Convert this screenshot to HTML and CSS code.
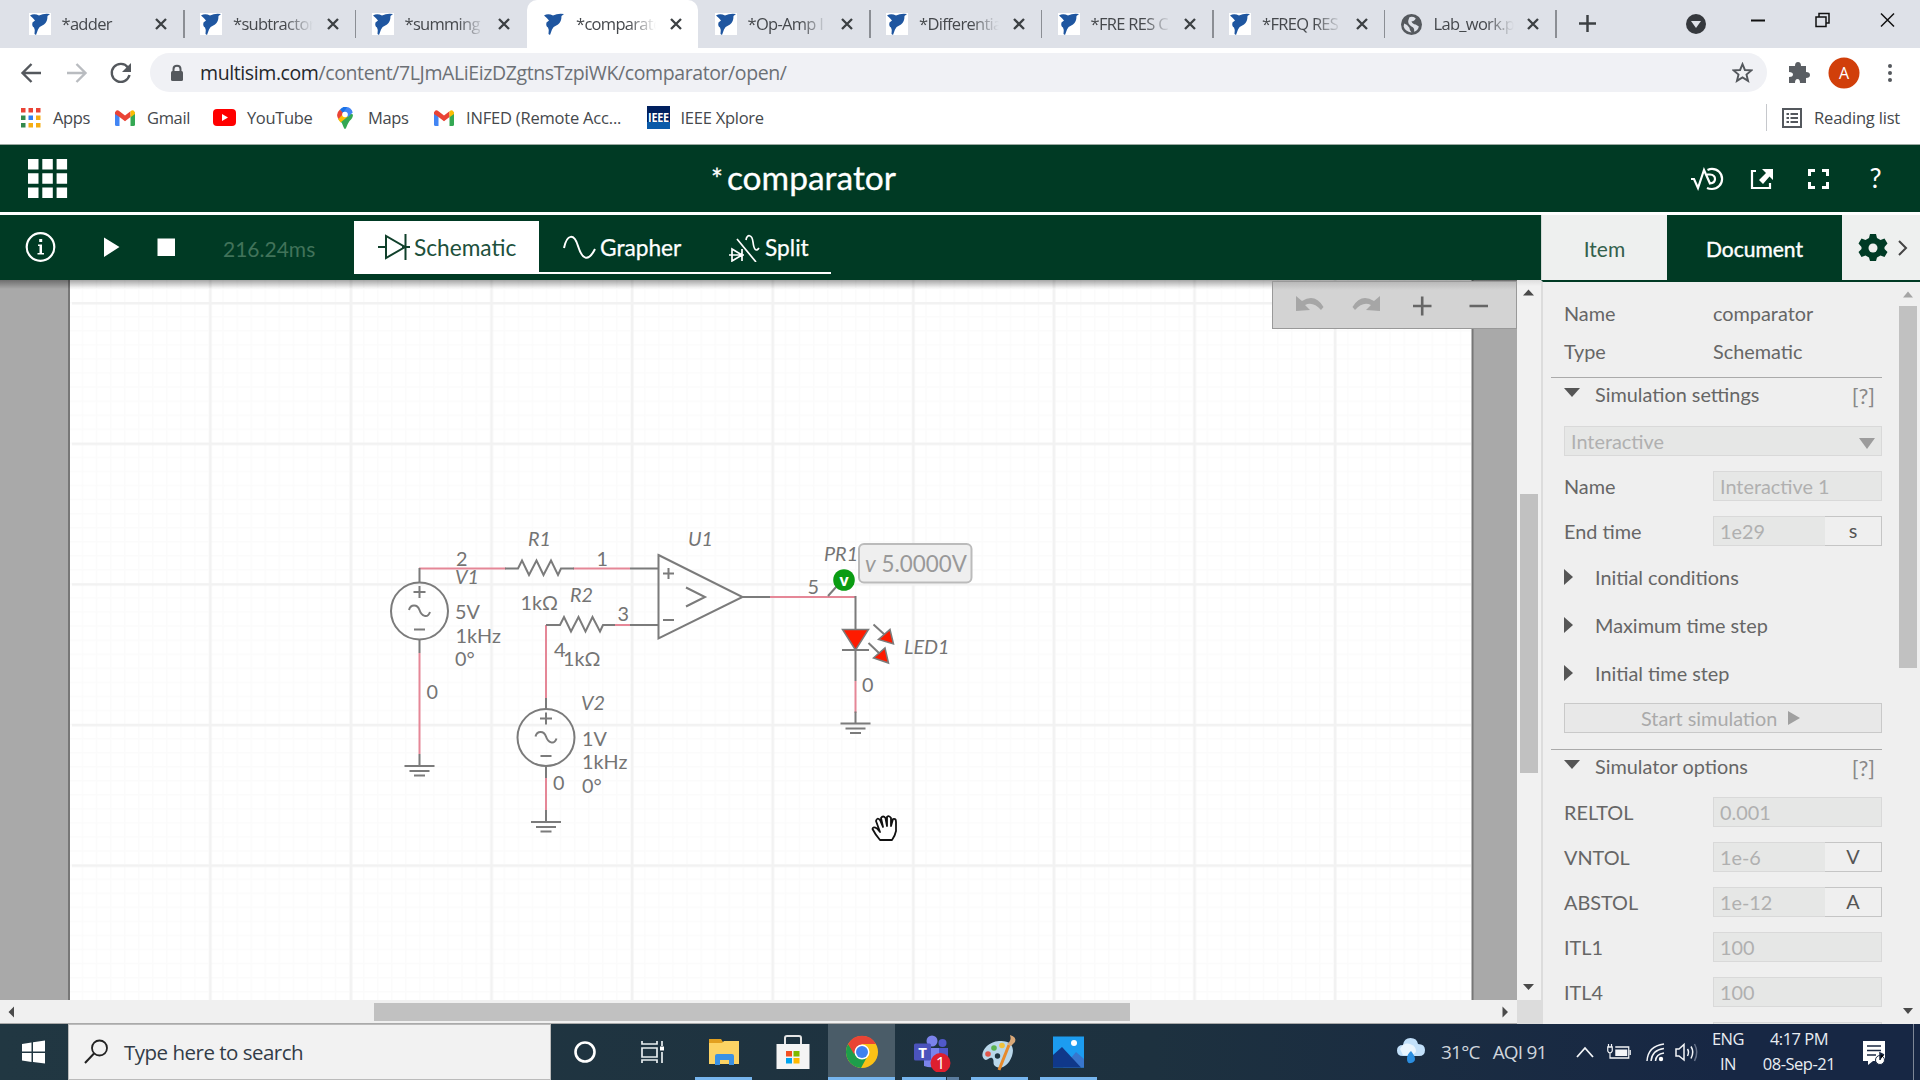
FILE: index.html
```html
<!DOCTYPE html>
<html lang="en">
<head>
<meta charset="utf-8">
<title>*comparator</title>
<link rel="stylesheet" href="styles.css">
</head>
<body>
<svg width="0" height="0" class="defs">
  <symbol id="ni" viewBox="0 0 22 22"><path fill="#1f56a0" d="M1 2.500Q5 0 10 2.500Q15 0 21 1L18.500 3Q18.500 9 15 11.500Q11 13 9 16.500L7 22L5.500 21Q6.500 17 5 14.500Q2.500 13 3.500 9.500L6 7.500Q3.500 4.500 1 2.500Z"/></symbol>
  <symbol id="x" viewBox="0 0 14 14"><path stroke="#3c4043" stroke-width="2.3" d="M2 2 L12 12 M12 2 L2 12"/></symbol>
  <symbol id="gm" viewBox="0 0 20 16"><path fill="#4285f4" d="M0 2 L4.5 5.5 V16 H1.5 Q0 16 0 14.5Z"/><path fill="#34a853" d="M20 2 L15.500 5.500 V16 H18.500 Q20 16 20 14.500Z"/><path fill="#ea4335" d="M0 2.500 Q1.500-1 4.500 1.200 L10 5.500 L15.500 1.200 V7 L10 11.300 L4.500 7 L0 4Z"/><path fill="#fbbc04" d="M15.500 1.200 Q18.500-1 20 2.500 V4 L15.500 7.300Z"/></symbol>
</svg>

<header class="tabs">
  <div class="tab"><svg class="fav"><use href="#ni"/></svg><span>*adder</span><svg class="close"><use href="#x"/></svg></div>
  <div class="tab"><svg class="fav"><use href="#ni"/></svg><span>*subtractor</span><svg class="close"><use href="#x"/></svg></div>
  <div class="tab bare"><svg class="fav"><use href="#ni"/></svg><span>*summing</span><svg class="close"><use href="#x"/></svg></div>
  <div class="tab active"><svg class="fav"><use href="#ni"/></svg><span>*comparator</span><svg class="close"><use href="#x"/></svg></div>
  <div class="tab"><svg class="fav"><use href="#ni"/></svg><span>*Op-Amp I</span><svg class="close"><use href="#x"/></svg></div>
  <div class="tab"><svg class="fav"><use href="#ni"/></svg><span>*Differential</span><svg class="close"><use href="#x"/></svg></div>
  <div class="tab"><svg class="fav"><use href="#ni"/></svg><span>*FRE RES C</span><svg class="close"><use href="#x"/></svg></div>
  <div class="tab"><svg class="fav"><use href="#ni"/></svg><span>*FREQ RES</span><svg class="close"><use href="#x"/></svg></div>
  <div class="tab"><svg class="globe" viewBox="0 0 20 20"><circle cx="10" cy="10" r="10" fill="#55595e"/><path fill="#dee1e8" d="M3 9 Q6 10 8 13 Q8 15 10 17.500 Q4 17 2.500 12Z M8 3 Q11 2 14 4 Q13 7 10 7 Q11 10 14 10 L17 12 Q16 16 12.500 17 Q13 13 10 12 Q6 9 7 6Z"/></svg><span>Lab_work.pdf</span><svg class="close"><use href="#x"/></svg></div>
  <svg class="plus" viewBox="0 0 18 18"><path stroke="#3c4043" stroke-width="2.600" d="M9 0V18M0 9H18"/></svg>
  <svg class="winctl" viewBox="0 0 224 48"><circle cx="14" cy="24" r="10" fill="#35383d"/><path d="M9 21H19L14 28Z" fill="#dee1e8"/><path stroke="#111" stroke-width="2" d="M69 20.500H83"/><g fill="none" stroke="#111" stroke-width="1.500"><path d="M134 17H144V26.500H134ZM137 17V13.500H147V23H144"/><path d="M199 13.500L212 26.500M212 13.500L199 26.500"/></g></svg>
</header>

<nav class="addr">
  <svg class="navs" viewBox="0 0 150 48" fill="none" stroke="#54585d" stroke-width="2.400"><path d="M41 25H23M31.500 16L22.500 25L31.500 34"/><path stroke="#b9bcc0" d="M67 25H85M76.500 16L85.500 25L76.500 34"/><path d="M128 19.500A9 9 0 1 0 129.500 27"/><path fill="#54585d" stroke="none" d="M131 15V24H122Z"/></svg>
  <div class="omni">
    <svg class="lock" viewBox="0 0 12 17"><rect y="6.500" width="12" height="10" rx="1.500" fill="#54585d"/><path fill="none" stroke="#54585d" stroke-width="2" d="M2.500 8V4.500Q2.500 1.200 6 1.200T9.500 4.500V8"/></svg>
    <span class="url"><b>multisim.com</b>/content/7LJmALiEizDZgtnsTzpiWK/comparator/open/</span>
    <svg class="star" viewBox="0 0 20 20"><path fill="none" stroke="#54585d" stroke-width="1.800" d="M10 2L12.300 7.600L18.500 8L13.800 12L15.300 18L10 14.700L4.700 18L6.200 12L1.500 8L7.700 7.600Z"/></svg>
  </div>
  <svg class="acts" viewBox="0 0 153 48"><path fill="#5a5e63" d="M22 18H28Q28 14 31 14T34 18H39V24Q43 24 43 27T39 30V35H33Q33 31 30.500 31T28 35H22V29Q26 29 26 26.500T22 24Z"/><circle cx="77" cy="25" r="15.500" fill="#d13f0a"/><text x="77" y="30.500" text-anchor="middle" font-size="16" fill="#fff">A</text><g fill="#54585d"><circle cx="123" cy="18" r="2"/><circle cx="123" cy="25" r="2"/><circle cx="123" cy="32" r="2"/></g></svg>
</nav>

<nav class="marks">
  <a class="m1"><svg width="20" height="20" viewBox="0 0 20 20"><path fill="#ea4335" d="M0 0h4.500v4.500h-4.500zM7.500 0h4.500v4.500h-4.500zM15 0h4.500v4.500h-4.500z"/><path fill="#34894d" d="M0 7.500h4.500v4.500h-4.500zM0 15h4.500v4.500h-4.500z"/><path fill="#2d7ff0" d="M7.500 7.500h4.500v4.500h-4.500z"/><path fill="#f5ad12" d="M15 7.500h4.500v4.500h-4.500zM15 15h4.500v4.500h-4.500zM7.500 15h4.500v4.500h-4.500z"/></svg>Apps</a>
  <a class="m2"><svg width="20" height="16"><use href="#gm"/></svg>Gmail</a>
  <a class="m3"><svg width="23" height="17" viewBox="0 0 23 17"><rect width="23" height="17" rx="4" fill="#f00"/><path fill="#fff" d="M9 5L15 8.500L9 12Z"/></svg>YouTube</a>
  <a class="m4"><svg width="16" height="22" viewBox="0 0 16 22"><path fill="#34a853" d="M1.500 12.500Q5 15 6.500 20Q8 24 9.500 20Q10.500 17 12.500 14Q16 11 16 7.500L11 6Z"/><path fill="#fbbc04" d="M1 12L5 7L11.500 9L3.500 15.500Z"/><path fill="#4285f4" d="M6 0Q14-1 15.700 5.500L11 10L6 5Z"/><path fill="#ea4335" d="M3 2.500L7 6L1.500 12Q-2 7 3 2.500Z"/><path fill="#1a73e8" d="M3 2.500Q6-1 10 .3L6 6Z"/><circle cx="8" cy="7.500" r="2.800" fill="#fff"/></svg>Maps</a>
  <a class="m5"><svg width="20" height="16"><use href="#gm"/></svg>INFED (Remote Acc...</a>
  <a class="m6"><svg width="23" height="23" viewBox="0 0 23 23"><rect width="23" height="23" fill="#00205f"/><path fill="#0a5aa8" d="M0 16H23V23H0Z"/><text x="11.500" y="16" text-anchor="middle" font-size="12" font-weight="bold" fill="#fff" textLength="21" lengthAdjust="spacingAndGlyphs">IEEE</text></svg>IEEE Xplore</a>
  <a class="m7"><svg width="20" height="20" viewBox="0 0 20 20"><path fill="none" stroke="#54585d" stroke-width="2" d="M1 1H19V19H1Z"/><path stroke="#54585d" stroke-width="2" d="M4.500 6H7M8.500 6H16M4.500 10H7M8.500 10H16M4.500 14H7M8.500 14H16"/></svg>Reading list</a>
</nav>

<section class="title">
  <svg class="grid9" viewBox="0 0 40 40"><path fill="#fff" d="M0 0h10.500v10.500H0zM14.300 0h10.500v10.500h-10.500zM28.600 0h10.500v10.500h-10.500zM0 14.300h10.500v10.500H0zM14.300 14.300h10.500v10.500h-10.500zM28.600 14.300h10.500v10.500h-10.500zM0 28.600h10.500v10.500H0zM14.300 28.600h10.500v10.500h-10.500zM28.600 28.600h10.500v10.500h-10.500z"/></svg>
  <h1><i>*</i>comparator</h1>
  <svg class="ticons" viewBox="0 0 200 40" fill="none" stroke="#fff" stroke-width="2.200"><path d="M1 20H4L8 29L14 11L20 24.500Q25 24 25 20T20 15.500H17"/><path d="M17.500 11Q20 9.800 22 9.800A10 10 0 0 1 22 30Q19 30 17 29"/><path d="M66 12H62V29H80V24"/><path fill="#fff" stroke="none" d="M72 10H83V21L79.500 17.500L73 25L69 21L76 14Z"/><path stroke-width="3" d="M119.500 17V11.500H125M132 11.500H137.500V17M137.500 23V28.500H132M125 28.500H119.500V23"/><text x="185.500" y="29" text-anchor="middle" fill="#fff" stroke="none" font-family="Lato" font-size="27">?</text></svg>
</section>

<section class="tools">
  <svg class="run" viewBox="0 0 190 64"><circle cx="40.500" cy="32" r="13.800" fill="none" stroke="#fff" stroke-width="2.200"/><path fill="#fff" d="M104 22.500L119.500 32L104 42ZM157.500 23.500H175V41H157.500ZM39.200 24H42.200V27H39.200ZM38 29.500H42V38H44V39.500H37.500V38H39.500V31H38Z"/></svg>
  <span class="time">216.24ms</span>
  <div class="views">
    <div class="view on"><svg width="33" height="30" viewBox="0 0 33 30"><path fill="none" stroke="#10402b" stroke-width="2" d="M0 14H8M24 14H32M8 3V25L27 14ZM27.500 1V27"/></svg>Schematic</div>
    <div class="view"><svg width="34" height="26" viewBox="0 0 34 26"><path fill="none" stroke="#fff" stroke-width="2" d="M1 13C4-1 11-2 15 11S25 28 32 14"/></svg>Grapher</div>
    <div class="view sp"><svg width="34" height="28" viewBox="0 0 34 28"><path fill="none" stroke="#fff" stroke-width="1.700" d="M9 5L28 28M1 21H16M4 15V27L14 21ZM14 15V27M18 6C19 0 24 0 25 8S28 18 31 14"/></svg>Split</div>
  </div>
  <div class="ptabs"><span class="pi">Item</span><span class="pd">Document</span><svg viewBox="0 0 78 64"><path fill="#003b25" d="M28 19H34L35 23L38.500 25L42.500 23.500L45.500 28.500L42.500 32V34L45.500 37L42.500 42L38.500 40.500L35 42.500L34 46H28L27 42.500L23.500 40.500L19.500 42L16.500 37L19.500 34V32L16.500 28.500L19.500 23.500L23.500 25L27 23Z"/><circle cx="31" cy="33" r="4.500" fill="#eeefee"/><path fill="none" stroke="#444" stroke-width="2" d="M57 26L64 33L57 40"/></svg></div>
</section>

<main class="work">
  <section class="stage">
    <div class="view-area">
      <svg class="sheet" viewBox="0 280 1517 720">
        <defs>
          <pattern id="minor" x="67.700" y="302" width="14.060" height="14.060" patternUnits="userSpaceOnUse"><path stroke="#fbfbfb" stroke-width="3" fill="none" d="M0 0H14.060M0 0V14.060"/></pattern>
          <pattern id="major" x="68.600" y="302" width="140.600" height="140.600" patternUnits="userSpaceOnUse"><path stroke="#f2f2f2" stroke-width="2.500" fill="none" d="M0 1.250H140.600M1.250 0V140.600"/></pattern>
          <linearGradient id="sh" x2="0" y2="1"><stop stop-color="#000" stop-opacity=".35"/><stop offset="1" stop-color="#000" stop-opacity="0"/></linearGradient>
          <g id="gnd"><path d="M0-12V0M-15 0H15M-10 5H10M-5.500 9.500H5.500"/></g>
          <g id="src"><circle r="28.500"/><path d="M-6-19H6M0-25V-13M-5.500 18.500H5.500M-10.500-1C-9-7-2-7 0-1S8 8 10.500 1"/></g>
        </defs>
        <rect y="279" width="1517" height="721" fill="#a9a9a9"/>
        <rect x="69" y="270" width="1403.500" height="750" fill="#fff" stroke="#777" stroke-width="2"/>
        <rect x="70" y="279" width="1401" height="721" fill="url(#minor)"/><rect x="72" y="279" width="1399" height="721" fill="url(#major)"/>
        <rect y="280" width="1517" height="9" fill="url(#sh)"/>
        <g fill="none" stroke="#7b7b7b" stroke-width="2">
          <path stroke="#e58797" d="M419 568.500H506M573 568.500H630M419.500 653V754M546 625V698M615 625H630M546 778V811M769 597H855M855.500 681V713"/>
          <path d="M419.500 583V568M505 568.500H518L522 560.500L529 575L536.500 560.500L543.500 575L551 560.500L558 575L561 568.500H574M630 568.500H658M546 625H560L564 617L571 631.500L578.500 617L585.500 631.500L592.500 617L600 631.500L603 625H615M630 625H658M419.500 639V653M546 698V709M546 766V778M742 597H770M855.500 596V681M658.500 555L742.500 597L658.500 638.500ZM663 573.500H674M668.500 568V579M663 620H674M686 587.500L705 597L686 606.500"/>
          <use href="#src" x="419.500" y="611"/><use href="#src" x="546" y="737.500"/>
          <use href="#gnd" x="419.500" y="766"/><use href="#gnd" x="546" y="822"/><use href="#gnd" x="855.500" y="723.500"/>
          <path d="M828 596L837 586"/>
          <path fill="#fe1b00" stroke-width="1.500" d="M842.500 629.500H868.500L855.500 650Z"/><path d="M842 650H869M873.500 624.500L885 635M868.500 643L880 654"/>
          <path fill="#fe1b00" stroke-width="1.500" d="M890 629.500L893.500 644L878.500 639.500ZM885 648L888.500 663L873.500 658Z"/>
        </g>
        <circle cx="844" cy="580" r="10.800" fill="#0a9c12"/><text x="844" y="585.500" text-anchor="middle" font-size="16" font-weight="bold" fill="#fff">v</text>
        <g class="lbl"><text class="it" x="528" y="545.500">R1</text><text class="it" x="688" y="545.500">U1</text><text class="it" x="455" y="583.500">V1</text><text class="it" x="570" y="601.500">R2</text><text class="it" x="581" y="710">V2</text><text class="it" x="824" y="561">PR1</text><text class="it" x="904" y="653.500">LED1</text>
          <text x="456" y="565.500">2</text><text x="596.500" y="565.500">1</text><text x="520.500" y="610">1kΩ</text><text x="617.500" y="621">3</text><text x="554" y="656.500">4</text><text x="563" y="666">1kΩ</text><text x="455" y="618.500">5V</text><text x="455.500" y="643">1kHz</text><text x="455" y="666">0°</text><text x="426.500" y="699">0</text><text x="582" y="745.500">1V</text><text x="582" y="769">1kHz</text><text x="582" y="793">0°</text><text x="553" y="790">0</text><text x="807.500" y="593.500">5</text><text x="862" y="691.500">0</text></g>
        <rect x="859" y="544" width="112.500" height="38.500" rx="5" fill="#efefef" stroke="#bbb" stroke-width="2"/><text class="probe" x="865" y="572"><tspan font-style="italic">v</tspan> 5.0000V</text>
        <path fill="#fff" stroke="#111" stroke-width="1.800" stroke-linejoin="round" d="M880 840Q875 834 872.500 829Q873 826 877 828.500L880 832L876 821Q877 817 880 820L883 827L881 818Q883 815 885.500 818L887 826V817Q889 815 891 818V826L893 819Q896 818 896 822V831Q895 836 892 840Z"/>
      </svg>
      <div class="zoombar"><svg viewBox="0 0 242 46"><g fill="#a6a6a6"><path d="M23 14L29 19Q42 11 50.500 25L48 28Q40 19 32 23L37 28L23 29Z"/><path d="M107 14L101 19Q88 11 79.500 25L82 28Q90 19 98 23L93 28L107 29Z"/></g><path stroke="#666" stroke-width="2.600" d="M140 24H158.500M149.200 14.500V33.500M196.500 24H215"/></svg></div>
    </div>
    <div class="vbar"><i></i><svg viewBox="0 0 24 720"><path fill="#4a4a4a" d="M6 15.500L11.500 9.500L17 15.500ZM6 704H17L11.500 710Z"/></svg></div>
    <div class="hbar"><svg viewBox="0 0 1517 24"><path fill="#4a4a4a" d="M14 6.500V17.500L8.500 12ZM1502.500 6.500V17.500L1508 12Z"/></svg></div>
    <div class="corner"></div>
  </section>

  <aside class="panel">
    <div class="props">
      <div class="info"><span>Name</span><span>comparator</span></div>
      <div class="info"><span>Type</span><span>Schematic</span></div>
      <div class="head first"><i class="dn"></i><span>Simulation settings</span><b>[?]</b></div>
      <div class="row"><div class="field sel">Interactive<i></i></div></div>
      <div class="row"><label>Name</label><div class="field">Interactive 1</div></div>
      <div class="row"><label>End time</label><div class="field">1e29<em>s</em></div></div>
      <div class="fold"><i class="rt"></i>Initial conditions</div>
      <div class="fold"><i class="rt"></i>Maximum time step</div>
      <div class="fold"><i class="rt"></i>Initial time step</div>
      <div class="start">Start simulation<i></i></div>
      <div class="head"><i class="dn"></i><span>Simulator options</span><b>[?]</b></div>
      <div class="row"><label>RELTOL</label><div class="field">0.001</div></div>
      <div class="row"><label>VNTOL</label><div class="field">1e-6<em>V</em></div></div>
      <div class="row"><label>ABSTOL</label><div class="field">1e-12<em>A</em></div></div>
      <div class="row"><label>ITL1</label><div class="field">100</div></div>
      <div class="row"><label>ITL4</label><div class="field">100</div></div>
      <div class="row"><label></label><div class="field"></div></div>
    </div>
    <div class="pbar"></div>
    <svg class="parr" viewBox="0 0 22 741"><path fill="#a5a5a5" d="M5 15.500L10 9.500L15 15.500Z"/><path fill="#4a4a4a" d="M5 726H15L10 732Z"/></svg>
  </aside>
</main>

<footer class="taskbar">
  <svg class="win" viewBox="0 0 68 56"><path fill="#fff" d="M22 20L31.500 18.500V27.500H22ZM33 18.200L45 16.500V27.500H33ZM22 29H31.500V38L22 36.500ZM33 29H45V39.500L33 38Z"/></svg>
  <div class="search"><svg viewBox="0 0 26 26"><circle cx="15.500" cy="9" r="7.500" fill="none" stroke="#222" stroke-width="1.800"/><path stroke="#222" stroke-width="2" d="M10 14.500L1 24"/></svg>Type here to search</div>
  <div class="apps">
    <div><svg viewBox="0 0 40 40"><circle cx="19" cy="20" r="9.500" fill="none" stroke="#fff" stroke-width="2.600"/></svg></div>
    <div><svg viewBox="0 0 40 40"><path fill="none" stroke="#e8eef0" stroke-width="1.700" d="M7 9V12H22V9M7 16H22V25H7ZM7 31V28H22V31M27 9V14M27 20V31"/><path fill="#fff" d="M25 14.500H29V18.500H25Z"/></svg></div>
    <div class="open"><svg viewBox="0 0 40 40"><path fill="#e2a020" d="M5 7H17L19 10V14H5Z"/><path fill="#fcd364" d="M5 11L18 11L20 9H35V32H5Z"/><path fill="#3b91e4" d="M11 33V24Q11 22 13 22H28Q30 22 30 24V33H25V28H16V33Z"/></svg></div>
    <div><svg viewBox="0 0 40 40"><path fill="none" stroke="#e5e5e5" stroke-width="2" d="M12 14V6Q12 4 14 4H26Q28 4 28 6V14"/><path fill="#f4f4f4" d="M3.500 12H36.500V37H3.500Z"/><path fill="#f25022" d="M13 19H19V24.500H13Z"/><path fill="#7fba00" d="M20.500 19H26.500V24.500H20.500Z"/><path fill="#00a4ef" d="M13 26H19V31.500H13Z"/><path fill="#ffb900" d="M20.500 26H26.500V31.500H20.500Z"/></svg></div>
    <div class="open cur"><svg viewBox="0 0 40 40"><circle cx="20" cy="20" r="16" fill="#fbc116"/><path fill="#1e9e4b" d="M6.100 12A16 16 0 0 0 19 36L25 25L20 20H12Z"/><path fill="#e94435" d="M6.100 12A16 16 0 0 1 34 12H20L12 22Z"/><circle cx="20" cy="20" r="7.500" fill="#fff"/><circle cx="20" cy="20" r="6" fill="#3f82f0"/></svg></div>
    <div class="open two"><svg viewBox="0 0 40 40"><circle cx="21" cy="9" r="5.500" fill="#7b83eb"/><circle cx="31.500" cy="11" r="4" fill="#5059c9"/><path fill="#5059c9" d="M23 16H37V28Q32 33 27 28Z"/><path fill="#7b83eb" d="M13 16H28V30Q24 38 13 34Z"/><rect x="3" y="11.500" width="17" height="17" rx="1.500" fill="#4b53bc"/><text x="11.500" y="25.500" text-anchor="middle" font-size="15" font-weight="bold" fill="#fff">T</text><circle cx="29.500" cy="31" r="10" fill="#de1f2e"/><text x="29.500" y="37" text-anchor="middle" font-size="17" fill="#fff">1</text></svg></div>
    <div class="open"><svg viewBox="0 0 40 40"><path fill="#b9d7ea" d="M19 9C31 8 35 15 32 24C28 35 20 38 15 34C12 31 15 28 12 26C9 25 7 30 4 27C-1 22 6 10 19 9Z"/><circle cx="8" cy="22" r="2.800" fill="#e0564a"/><circle cx="14" cy="16" r="2.800" fill="#5bb450"/><circle cx="22" cy="13.500" r="2.800" fill="#f0c23c"/><circle cx="17.500" cy="24" r="2.700" fill="#203541"/><path stroke="#e78a2c" stroke-width="3" d="M19 38L29 13"/><path fill="#d9a878" d="M27 12Q32 9 30 3Q37 5 35 10L31 14Z"/></svg></div>
    <div class="open"><svg viewBox="0 0 40 40"><rect x="4" y="4.500" width="31" height="31" fill="#1c9cf0"/><circle cx="25" cy="11" r="3" fill="#fff"/><path fill="#3876cd" d="M14 35.500L27 20L35 27V35.500Z"/><path fill="#10388a" d="M4 23L13 15L32 35.500H4Z"/></svg></div>
  </div>
  <svg class="cloud" viewBox="0 0 30 30"><path fill="#c2e0fa" d="M7 20Q1 20 1 14.500T7 9Q8 2 14.500 2Q21 2 22 8Q29 8 29 14T23 20Z"/><path fill="#eaf5fe" d="M4 13Q8 6 14 8T20 15T7 19Z"/><path fill="#2b8ee0" d="M15 15Q19 20 19 23T15 27T11 23T15 15Z"/></svg>
  <span class="weather">31°C<i>AQI 91</i></span>
  <svg class="tray" viewBox="0 0 140 56" fill="none" stroke="#f3f5f8" stroke-width="1.800"><path d="M8 33L16 24L24 33"/><g transform="translate(9.500 0) scale(.75 1)"><path stroke-width="1.600" d="M49 23H67V34H46M69 26V31M40 20V23M44 20V23M39 23H45V27Q44 29 42 29T39 27ZM42 29V34H46"/><path fill="#f3f5f8" stroke="none" d="M49 25.500H65V32H49Z"/></g><path stroke-width="1.500" d="M78 37Q79 22 95 20M82 37Q83 26 95 24.500M86.500 37Q87 30 95 29"/><circle cx="92" cy="35" r="2.200" fill="#fff" stroke="none"/><path stroke-width="1.500" d="M107 25H110L115 20.500V36L110 32H107ZM118.500 25Q120.500 28 118.500 32M122 22.500Q125.500 28 122 34.500"/><path stroke="#66728a" stroke-width="1.500" d="M125.500 20Q130 28 125.500 37"/></svg>
  <div class="two lang">ENG<br>IN</div>
  <div class="two clock">4:17 PM<br>08-Sep-21</div>
  <svg class="note" viewBox="0 0 60 56"><path fill="#fff" d="M3 17H25V37H13L8 41V37H3Z"/><path stroke="#182742" stroke-width="1.600" d="M7 22H21M7 26.500H21M7 31H16"/><circle cx="20" cy="36" r="4.500" fill="#fff" stroke="#182742"/><path stroke="#182742" stroke-width="1.500" d="M20 36V29L24 31"/><path stroke="#7d8796" d="M53.500 0V56"/></svg>
</footer>
</body>
</html>
```
FILE: styles.css
```css
* { box-sizing: border-box; }
body { margin: 0; width: 1920px; height: 1080px; overflow: hidden; display: flex; flex-direction: column; font-family: "Open Sans", "Noto Sans", sans-serif; background: #fff; color: #45484c; }
svg { display: block; flex: none; }
.defs { position: absolute; }

.tabs { height: 48px; flex: none; background: #dee1e8; display: flex; padding-left: 12px; }
.tab { width: 171.5px; height: 48px; flex: none; display: flex; align-items: center; padding-left: 16.500px; position: relative; font-size: 16.500px; letter-spacing: -.7px; }
.tab::after { content: ""; position: absolute; right: -1px; top: 10px; height: 28px; width: 1.500px; background: #8b8e94; }
.tab.bare::after, .tab.active::after { display: none; }
.tab.active { background: #fff; border-radius: 10px 10px 0 0; }
.fav { width: 22px; height: 22px; background: #fff; }
.globe { width: 21px; height: 21px; }
.tab span { width: 80px; margin: -2px 0 0 11px; overflow: hidden; white-space: nowrap; -webkit-mask-image: linear-gradient(90deg, #000 65%, transparent 100%); mask-image: linear-gradient(90deg, #000 65%, transparent 100%); }
.close { width: 14px; height: 14px; margin-left: 12.500px; }
.globe + span { margin-left: 12px; }
.plus { width: 17px; height: 17px; margin: 15px 0 0 23px; }
.winctl { width: 224px; height: 48px; margin-left: 86px; }

.addr { height: 48px; flex: none; display: flex; }
.navs { width: 150px; height: 48px; }
.omni { width: 1617px; height: 39px; margin-top: 5px; border-radius: 20px; background: #f0f1f5; display: flex; align-items: center; padding: 0 14px 0 21px; }
.lock { width: 12px; height: 18px; }
.url { margin-left: 17px; flex: 1; font-size: 19.500px; letter-spacing: -.4px; color: #6c7075; white-space: nowrap; }
.url b { font-weight: 400; color: #25282c; }
.star { width: 21px; height: 21px; }
.acts { width: 153px; height: 48px; }

.marks { height: 48px; flex: none; display: flex; align-items: center; font-size: 16.500px; letter-spacing: -.35px; padding: 0 0 5px 21px; }
.marks a { display: flex; align-items: center; gap: 12px; white-space: nowrap; flex: none; line-height: 21px; }
.m1 { width: 94px; }
.m2 { width: 98px; }
.m3 { width: 124px; }
.m4 { width: 97px; }
.m5 { width: 212.500px; letter-spacing: -.2px; }
.marks .m3, .marks .m6 { gap: 11px; }
.marks .m4 { gap: 15px; }
.m6 { letter-spacing: -.25px; }
.m7 { margin-left: auto; height: 27px; padding: 0 20px 0 15px; border-left: 1.500px solid #c6c8cc; letter-spacing: -.2px; }

.title { height: 71px; flex: none; background: #003a24; border-top: 1px solid #9ba9a2; border-bottom: 3px solid #fff; display: flex; align-items: center; color: #fff; font-family: Lato, sans-serif; }
.grid9 { width: 40px; height: 40px; margin-left: 28px; }
h1 { width: 190px; margin: 0 0 4px 643px; font-size: 33.500px; font-weight: 400; white-space: nowrap; -webkit-text-stroke: .3px #fff; }
h1 i { font-style: normal; font-size: 28px; margin-right: 4px; }
.ticons { width: 200px; height: 40px; margin-left: 789px; }

.tools { height: 65px; flex: none; background: #003a24; display: flex; color: #fff; font-family: Lato, sans-serif; }
.run { width: 190px; height: 64px; flex: none; }
.time { width: 131px; margin-left: 33px; line-height: 68px; font-size: 21px; color: #41735a; flex: none; }
.views { display: flex; flex: none; height: 53px; margin-top: 6px; width: 477px; border-bottom: 2.500px solid #fff; font-size: 22.700px; -webkit-text-stroke: .25px; }
.view { display: flex; flex: none; align-items: center; height: 53px; gap: 3px; width: 170px; white-space: nowrap; padding-left: 24px; }
.view.on { width: 185px; background: #fff; color: #20503b; -webkit-text-stroke: 0; }
.view.sp { width: 122px; padding-left: 19px; }
.ptabs { margin-left: auto; width: 379px; background: #eef0ef; border-left: 1px solid #d4dad7; display: flex; font-size: 21px; line-height: 68px; text-align: center; }
.pi { width: 125px; color: #33604c; }
.pd { width: 175px; background: #003a24; -webkit-text-stroke: .4px; }
.ptabs svg { width: 78px; height: 64px; }

.work { height: 744px; flex: none; display: flex; }
.stage { width: 1541px; display: grid; grid-template: 720px 24px / 1517px 24px; }
.view-area { position: relative; }
.sheet { width: 1517px; height: 720px; }
.lbl text { font-family: Lato, sans-serif; font-size: 19.800px; fill: #747474; }
.lbl .it { font-style: italic; }
.probe { font-family: Lato, sans-serif; font-size: 22.400px; fill: #999; }
.zoombar { position: absolute; left: 1272px; top: 1px; width: 245px; height: 48px; background: linear-gradient(#b9b9b9, #d3d3d3 8px); border: 1.500px solid #999; }
.zoombar svg { width: 242px; height: 46px; }
.vbar { background: linear-gradient(#ddd, #f1f1f1 6px); position: relative; }
.vbar svg { width: 24px; height: 720px; }
.vbar i { position: absolute; left: 3px; top: 214px; width: 18px; height: 279px; background: #c1c1c1; }
.hbar { background: linear-gradient(#c1c1c1, #c1c1c1) 374px 3px / 756px 18px no-repeat #f0f0f0; border-bottom: 1px solid #aaa; }
.hbar svg { width: 1517px; height: 24px; }
.corner { background: #dcdcdc; }

.panel { flex: 1; border-left: 2px solid #dcdcdc; border-top: 2.500px solid #003a24; background: #efefef; display: flex; overflow: hidden; font-family: Lato, sans-serif; font-size: 19.850px; color: #666; }
.props { width: 356px; padding: 12px 0 0 8px; }
.info { height: 38px; line-height: 38px; padding-left: 13px; display: flex; }
.info span:first-child { width: 149px; }
.head { height: 40px; width: 331px; border-top: 1.500px solid #aaa; display: flex; margin-top: 16px; padding-left: 13px; line-height: 33px; }
.head.first { height: 41px; margin-top: 7px; }
.head span { flex: 1; }
.head b { font-weight: 400; color: #888; margin-right: 7px; font-size: 22px; line-height: 36px; }
.dn { border: 8px solid transparent; border-top: 9px solid #555; border-bottom: 0; margin: 10px 15px 0 0; height: 9px; }
.row { height: 45px; display: flex; align-items: center; padding-left: 13px; }
.row label { width: 149px; }
.field { width: 169px; height: 30px; border: 1px solid #d9d9d9; background: #e6e7e6; color: #b0b0b0; line-height: 28px; padding-left: 6px; position: relative; display: flex; justify-content: space-between; }
.field.sel { width: 318px; }
.field.sel i { border: 8px solid transparent; border-top: 11px solid #9c9c9c; border-bottom: 0; height: 11px; margin: 11px 6px 0 0; }
.field em { width: 57px; margin: -1px; height: 30px; font-style: normal; text-align: center; color: #555; border: 1px solid #c5c5c5; border-left: 0; background: #efefef; line-height: 27px; }
.fold { height: 48px; line-height: 47px; padding-left: 13px; display: flex; align-items: center; }
.rt { border: 8px solid transparent; border-left: 9px solid #555; border-right: 0; margin-right: 22px; }
.start { margin: 6px 0 0 13px; width: 318px; height: 30px; border: 1.500px solid #c9c9c9; background: #e8e8e8; color: #aaa; line-height: 27px; padding-left: 76px; display: flex; align-items: center; gap: 11px; }
.start i { border: 7.500px solid transparent; border-left: 12px solid #a0a0a0; border-right: 0; }
.pbar { width: 18px; margin-top: 24px; height: 362px; background: #c1c1c1; }
.parr { width: 22px; height: 741px; margin-left: -19px; }

.taskbar { height: 56px; flex: none; background: linear-gradient(90deg, #213742, #1d313f 60%, #172744 90%); display: flex; position: relative; color: #e9edf2; }
.win { width: 68px; height: 56px; }
.search { width: 483px; height: 56px; background: #f2f2f2; border: 1px solid #bbb; display: flex; align-items: center; padding-left: 15px; gap: 14px; font-size: 20.500px; letter-spacing: -.5px; color: #333c47; }
.search svg { width: 26px; height: 26px; }
.apps { display: flex; width: 847px; }
.apps div { width: 69px; height: 56px; padding: 8px 14.500px 0; position: relative; }
.apps svg { width: 40px; height: 40px; }
.apps .open::after { content: ""; position: absolute; left: 6px; right: 6px; bottom: 0; height: 3px; background: #76b5ee; }
.apps .two::after { background: linear-gradient(90deg, #76b5ee 44px, #1d313f 44px, #1d313f 45px, #5b7d9f 45px); }
.apps .cur { background: linear-gradient(#4a5c68, #4a5c68) 1px 0 / 67px 56px no-repeat; }
.apps .cur::after { left: 1px; right: 1px; }
.cloud { width: 30px; height: 30px; margin: 12px 15px 0 -2px; }
.weather { width: 135px; line-height: 56px; font-size: 19px; letter-spacing: -.8px; white-space: nowrap; color: #cfd5dc; }
.weather i { font-style: normal; margin-left: 13px; }
.tray { width: 140px; height: 56px; margin-left: -7px; }
.two.lang, .two.clock { font-size: 16.500px; line-height: 25px; letter-spacing: -.5px; text-align: center; padding-top: 2px; }
.two.lang { width: 38px; }
.two.clock { width: 90px; margin-left: 7px; white-space: nowrap; }
.note { width: 60px; height: 56px; margin-left: auto; }
```
